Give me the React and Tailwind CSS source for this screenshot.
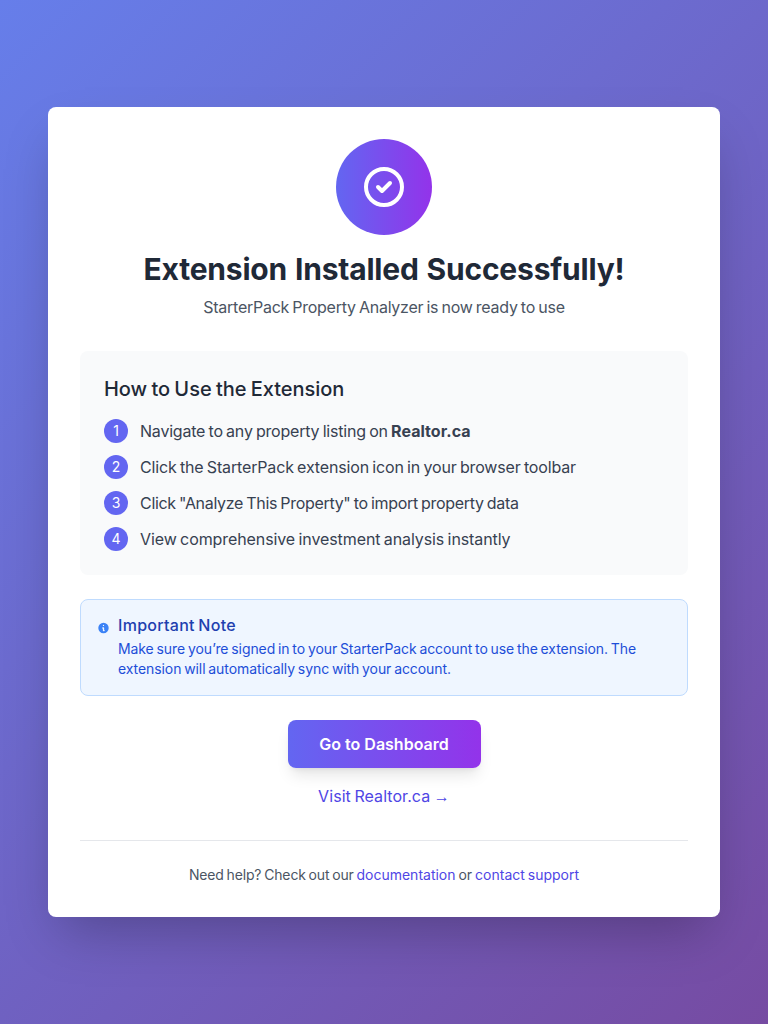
const steps = [
  {
    spacing: "tracking-[-0.205px]",
    text: (
      <>
        Navigate to any property listing on <strong className="font-bold tracking-[0.04px]">Realtor.ca</strong>
      </>
    ),
  },
  { spacing: "tracking-[-0.155px]", text: "Click the StarterPack extension icon in your browser toolbar" },
  { spacing: "tracking-[-0.31px]", text: 'Click "Analyze This Property" to import property data' },
  { spacing: "tracking-[-0.092px]", text: "View comprehensive investment analysis instantly" },
];

function CheckCircle() {
  return (
    <svg className="size-12 text-white" fill="none" stroke="currentColor" viewBox="0 0 24 24">
      <path strokeLinecap="round" strokeLinejoin="round" strokeWidth="2" d="M9 12l2 2 4-4m6 2a9 9 0 11-18 0 9 9 0 0118 0z" />
    </svg>
  );
}

function InfoIcon() {
  return (
    <svg className="mt-0.5 mr-2 h-5 w-[13px] shrink-0 text-[#3b82f6]" fill="currentColor" viewBox="0 0 20 20">
      <path fillRule="evenodd" clipRule="evenodd" d="M18 10a8 8 0 11-16 0 8 8 0 0116 0zm-7-4a1 1 0 11-2 0 1 1 0 012 0zM9 9a1 1 0 000 2v3a1 1 0 001 1h1a1 1 0 100-2v-3a1 1 0 00-1-1H9z" />
    </svg>
  );
}

export default function App() {
  return (
    <div className="flex min-h-screen items-center justify-center bg-[linear-gradient(135deg,#667eea_0%,#764ba2_100%)] font-['Inter',sans-serif] [word-spacing:-1px]">
      <div className="w-[672px] rounded-lg bg-white p-8 shadow-2xl">
        <div className="mb-8 text-center">
          <div className="mx-auto mb-4 flex size-24 items-center justify-center rounded-full bg-linear-to-r/srgb from-[#6366f1] to-[#9333ea]">
            <CheckCircle />
          </div>
          <h1 className="mb-2 text-3xl font-bold tracking-[-0.2px] text-[#1f2937] [word-spacing:1px]">Extension Installed Successfully!</h1>
          <p className="tracking-[-0.26px] text-[#4b5563]">StarterPack Property Analyzer is now ready to use</p>
        </div>

        <div className="mb-6 rounded-lg bg-[#f9fafb] p-6">
          <h2 className="mb-4 text-xl font-medium tracking-[-0.03px] text-[#1f2937]">How to Use the Extension</h2>
          <ol className="flex flex-col gap-3">
            {steps.map((step, i) => (
              <li key={i} className="flex items-start">
                <span className="mr-3 flex size-6 shrink-0 items-center justify-center rounded-full bg-[#6366f1] text-sm text-white">{i + 1}</span>
                <span className={`text-[#374151] ${step.spacing}`}>{step.text}</span>
              </li>
            ))}
          </ol>
        </div>

        <div className="mb-6 rounded-lg border border-[#bfdbfe] bg-[#eff6ff] p-4">
          <div className="flex items-start">
            <InfoIcon />
            <div>
              <h3 className="mb-1 leading-[1.2] font-medium tracking-[0.28px] text-[#1e40af]">Important Note</h3>
              <p className="text-sm tracking-[-0.085px] text-[#1d4ed8]">
                Make sure you’re signed in to your StarterPack account to use the extension. The
                <br />
                extension will automatically sync with your account.
              </p>
            </div>
          </div>
        </div>

        <div className="flex flex-col items-center gap-4">
          <button className="h-12 w-[193px] rounded-lg bg-linear-to-r/srgb from-[#6366f1] to-[#9333ea] font-semibold text-white shadow-lg">
            Go to Dashboard
          </button>
          <a className="h-6 tracking-[0.06px] text-[#4f46e5]">
            Visit Realtor.ca <span className="font-['Liberation_Sans',sans-serif] leading-none">→</span>
          </a>
        </div>

        <div className="mt-8 border-t border-[#e5e7eb] pt-6 text-center text-sm text-[#4b5563]">
          <span className="tracking-[-0.15px]">Need help? Check out our </span>
          <a className="text-[#4f46e5]">documentation</a> or <a className="text-[#4f46e5]">contact support</a>
        </div>
      </div>
    </div>
  );
}
